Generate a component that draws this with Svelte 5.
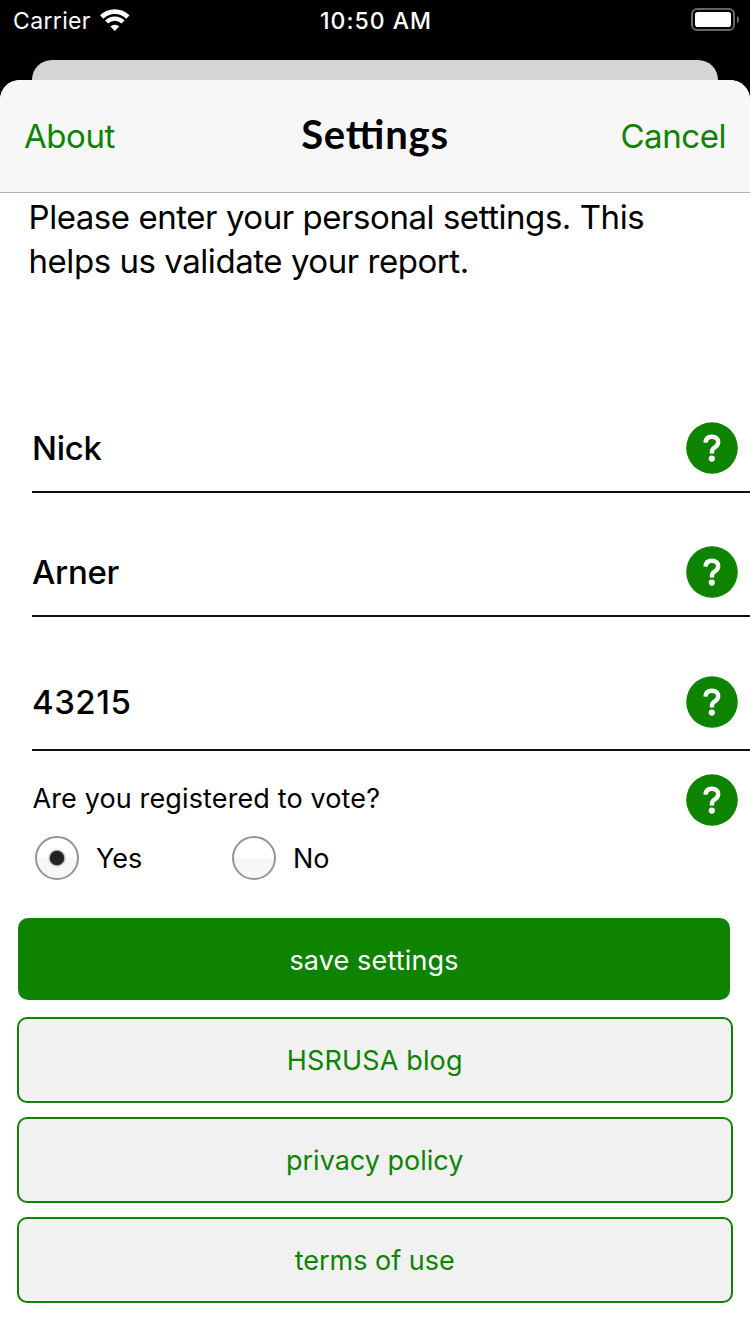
<script>
  let fields = $state([
    { id: 'first', value: 'Nick' },
    { id: 'last', value: 'Arner' },
    { id: 'zip', value: '43215' }
  ]);
  const links = [
    { id: 'blog', label: 'HSRUSA blog' },
    { id: 'privacy', label: 'privacy policy' },
    { id: 'terms', label: 'terms of use' }
  ];
  let registered = $state('Yes');
</script>

{#snippet help()}
  <button class="help">
    <svg width="52" height="52" viewBox="0 0 52 52">
      <circle cx="26" cy="26" r="25.8" fill="#0e8300" />
      <path d="M19.5 20.6 C19.7 16.8 21.9 14.7 25.8 14.7 C29.8 14.7 32.2 17 32.2 20 C32.2 22.8 30.8 24.1 28.8 25.4 C26.8 26.6 26 27.5 26 29.6 V31.4" fill="none" stroke="#fff" stroke-width="4.4" />
      <circle cx="25.8" cy="36.6" r="3.1" fill="#fff" />
    </svg>
  </button>
{/snippet}

<div class="screen">
  <div class="status">
    <div class="carrier">
      <span>Carrier</span>
      <svg width="30" height="22" viewBox="0 0 30 22">
        <g fill="none" stroke="#fff">
          <path d="M1.7 8 A18.6 18.6 0 0 1 27.9 8" stroke-width="4.7" />
          <path d="M6.6 13 A11.6 11.6 0 0 1 23 13" stroke-width="4.3" />
        </g>
        <path d="M14.8 22 L10.4 17.5 A6.3 6.3 0 0 1 19.2 17.5 Z" fill="#fff" />
      </svg>
    </div>
    <span class="time">10:50 AM</span>
    <svg class="battery" width="48" height="23" viewBox="0 0 48 23">
      <rect x="1" y="1" width="42" height="21" rx="5" fill="none" stroke="#666" stroke-width="2" />
      <rect x="4" y="4" width="36" height="15" rx="2.8" fill="#fff" />
      <path d="M46 8 Q48 9 48 11.5 Q48 14 46 15 Z" fill="#777" />
    </svg>
  </div>
  <div class="behind"></div>
  <div class="sheet">
    <header>
      <button class="nav about">About</button>
      <h1>Settings</h1>
      <button class="nav cancel">Cancel</button>
    </header>
    <p class="intro">Please enter your personal settings. This<br />helps us validate your report.</p>
    <div class="fields">
      {#each fields as field (field.id)}
        <div class="field {field.id}">
          <span class="value">{field.value}</span>
          {@render help()}
        </div>
      {/each}
    </div>
    <div class="question">
      <span>Are you registered to vote?</span>
      {@render help()}
    </div>
    <div class="options">
      {#each ['Yes', 'No'] as option}
        <button class="option" onclick={() => (registered = option)}>
          <span class="radio">{#if registered === option}<span class="dot"></span>{/if}</span>
          <span>{option}</span>
        </button>
      {/each}
    </div>
    <button class="save">save settings</button>
    <div class="links">
      {#each links as link (link.id)}
        <button class="link {link.id}"><span>{link.label}</span></button>
      {/each}
    </div>
  </div>
</div>

<style>
  :global(body) { background: #000; }
  .screen {
    width: 750px;
    height: 1334px;
    overflow: hidden;
    background: #000;
    color: #000;
    font-family: Inter, sans-serif;
    display: flex;
    flex-direction: column;
  }
  button {
    border: 0;
    padding: 0;
    margin: 0;
    background: none;
    color: inherit;
    font: inherit;
    letter-spacing: inherit;
  }
  svg { display: block; }
  .status {
    height: 60px;
    flex: none;
    box-sizing: border-box;
    padding: 0 11px 0 13px;
    display: grid;
    grid-template-columns: 1fr auto 1fr;
    align-items: start;
    color: #fff;
    font-size: 23px;
    line-height: 42px;
  }
  .carrier {
    display: flex;
    gap: 9px;
    letter-spacing: 0.35px;
  }
  .carrier svg { margin-top: 9px; }
  .time { font-weight: 500; letter-spacing: 1px; }
  .battery { justify-self: end; margin-top: 8px; }
  .behind {
    height: 20px;
    flex: none;
    margin: 0 32px;
    border-radius: 20px 20px 0 0;
    background: #d5d5d5;
  }
  .sheet {
    flex: 1;
    border-radius: 20px 20px 0 0;
    background: #fff;
    overflow: hidden;
  }
  header {
    height: 113px;
    box-sizing: border-box;
    padding: 0 24px;
    border-bottom: 1px solid #b1b1b1;
    background: #f7f7f7;
    display: grid;
    grid-template-columns: 1fr auto 1fr;
    align-items: center;
  }
  .nav {
    color: #0e8300;
    font-size: 33px;
    line-height: 40px;
    letter-spacing: -0.45px;
  }
  .about { justify-self: start; }
  .cancel { justify-self: end; }
  h1 {
    margin: 0 0 4px;
    font: 700 40px/46px Lato, sans-serif;
    font-feature-settings: "liga" 1;
    letter-spacing: 0.8px;
  }
  .intro {
    margin: 2px 0 0 28.5px;
    font-size: 33px;
    line-height: 44px;
    letter-spacing: -0.45px;
    white-space: nowrap;
  }
  .fields { margin-top: 139px; padding-left: 32px; }
  .field {
    height: 71px;
    box-sizing: border-box;
    display: flex;
    justify-content: space-between;
    align-items: flex-start;
    padding-right: 12px;
    border-bottom: 2px solid #111;
    margin-bottom: 53px;
  }
  .last { margin-bottom: 59px; }
  .zip { height: 75px; margin-bottom: 0; }
  .value {
    font-size: 33px;
    font-weight: 500;
    line-height: 52px;
    letter-spacing: -0.3px;
  }
  .zip .value { letter-spacing: 0.5px; }
  .question {
    margin-top: 23px;
    padding: 0 12px 0 32.5px;
    display: flex;
    justify-content: space-between;
    font-size: 27px;
    line-height: 49px;
    letter-spacing: 0.13px;
  }
  .options {
    display: flex;
    margin: 10px 0 0 35px;
    font-size: 27px;
    line-height: 46px;
  }
  .option {
    display: flex;
    gap: 17px;
    width: 197px;
    height: 44px;
  }
  .radio {
    width: 44px;
    height: 44px;
    box-sizing: border-box;
    border: 2px solid #949494;
    border-radius: 50%;
    background: linear-gradient(#fff 50%, #f7f7f7 50%);
    display: grid;
    place-items: center;
  }
  .dot {
    width: 14px;
    height: 14px;
    border-radius: 50%;
    background: #222;
    box-shadow: 0 0 2px 0.5px #333;
  }
  .save {
    display: block;
    width: 712px;
    height: 82px;
    margin: 38px 0 0 18px;
    padding-top: 2px;
    border-radius: 10px;
    background: #0e8300;
    color: #fff;
    font-size: 27px;
    letter-spacing: 0.15px;
  }
  .links {
    display: grid;
    gap: 14px;
    margin: 17px 17px 0 17.4px;
  }
  .link {
    height: 86px;
    padding-right: 1px;
    border: 2px solid #0e8300;
    border-radius: 10px;
    background: #f1f1f1;
    color: #0e8300;
    font-size: 27px;
  }
  .blog { letter-spacing: 0.15px; }
</style>
